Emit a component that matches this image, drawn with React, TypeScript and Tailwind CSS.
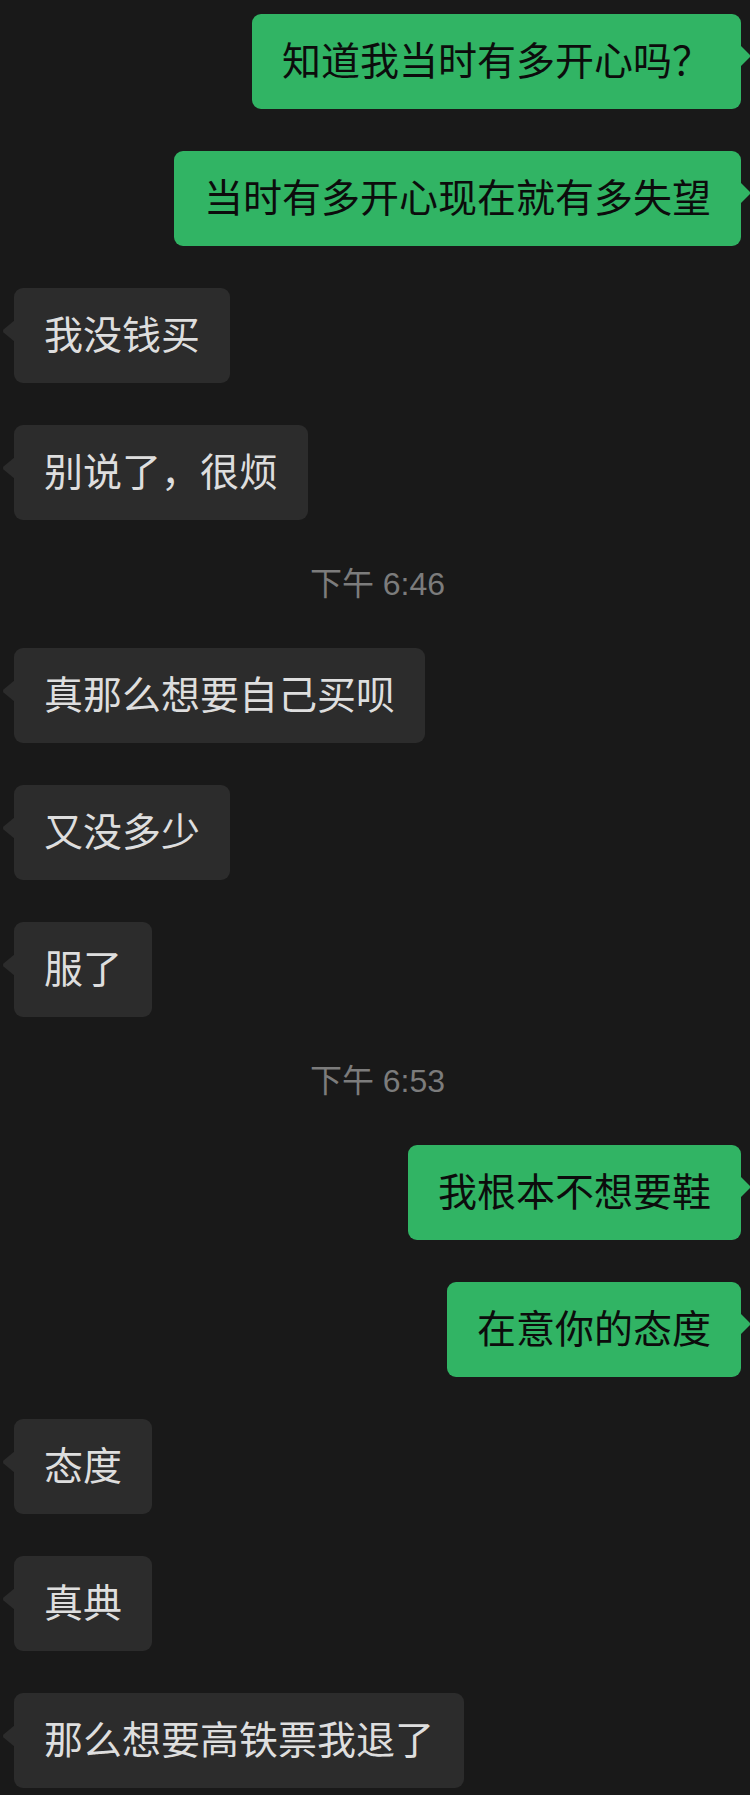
import React from "react";

type Msg =
  | { kind: "me"; text: string }
  | { kind: "other"; text: string }
  | { kind: "time"; text: string };

const messages: Msg[] = [
  { kind: "me", text: "知道我当时有多开心吗？" },
  { kind: "me", text: "当时有多开心现在就有多失望" },
  { kind: "other", text: "我没钱买" },
  { kind: "other", text: "别说了，很烦" },
  { kind: "time", text: "下午 6:46" },
  { kind: "other", text: "真那么想要自己买呗" },
  { kind: "other", text: "又没多少" },
  { kind: "other", text: "服了" },
  { kind: "time", text: "下午 6:53" },
  { kind: "me", text: "我根本不想要鞋" },
  { kind: "me", text: "在意你的态度" },
  { kind: "other", text: "态度" },
  { kind: "other", text: "真典" },
  { kind: "other", text: "那么想要高铁票我退了" },
];

const font = {
  fontFamily: '"Liberation Sans", "Noto Sans CJK SC", sans-serif',
};

function Bubble({ me, text }: { me: boolean; text: string }) {
  return (
    <div className={me ? "flex justify-end" : "flex justify-start"}>
      <div
        className={
          me
            ? "relative flex h-[95px] items-center rounded-[9px] bg-[#31b464] px-[30px] text-[39px] text-[#0c0c0c]"
            : "relative flex h-[95px] items-center rounded-[9px] bg-[#2c2c2c] px-[30px] text-[39px] text-[#dedede]"
        }
        style={font}
      >
        <span className="leading-none whitespace-nowrap">{text}</span>
        {me ? (
          <svg
            className="absolute right-[-10px] top-[31px]"
            width="11"
            height="22"
            viewBox="0 0 11 22"
          >
            <path d="M0 0 L9.5 9.6 Q10.6 11 9.5 12.4 L0 22 Z" fill="#31b464" />
          </svg>
        ) : (
          <svg
            className="absolute left-[-12px] top-[32px]"
            width="13"
            height="22"
            viewBox="0 0 13 22"
          >
            <path d="M13 0 L1.5 9.6 Q0.2 11 1.5 12.4 L13 22 Z" fill="#2c2c2c" />
          </svg>
        )}
      </div>
    </div>
  );
}

export default function App() {
  return (
    <div className="min-h-[1795px] w-[750px] bg-[#191919] pt-[14px] pb-[8px] pl-[14px] pr-[9px]">
      <div className="flex flex-col gap-[42px]">
        {messages.map((m, i) =>
          m.kind === "time" ? (
            <div
              key={i}
              className="flex h-[44px] items-center justify-center text-[32px] text-[#7c7c7c]"
              style={font}
            >
              <span className="leading-none">{m.text}</span>
            </div>
          ) : (
            <Bubble key={i} me={m.kind === "me"} text={m.text} />
          )
        )}
      </div>
    </div>
  );
}
